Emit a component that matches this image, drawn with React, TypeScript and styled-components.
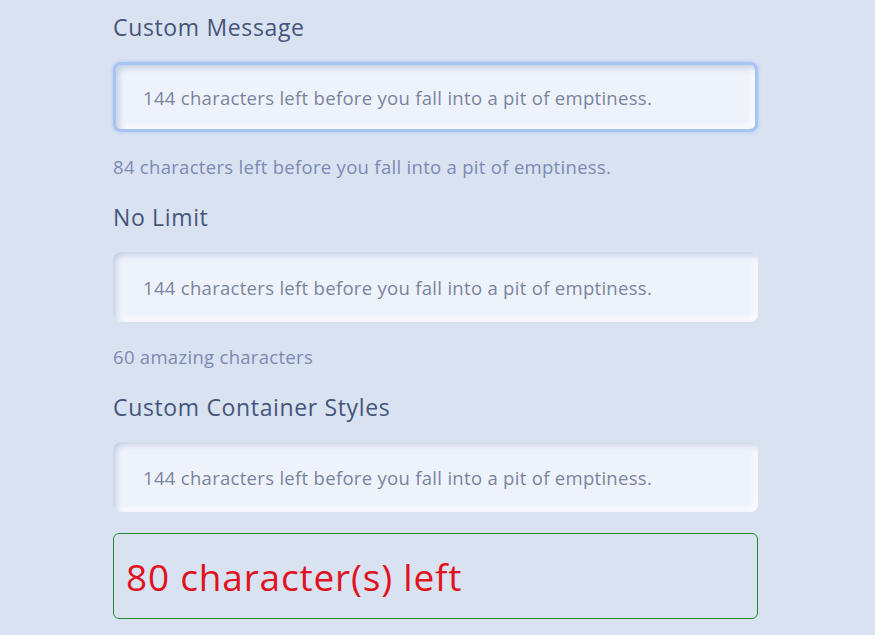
import styled, { createGlobalStyle } from "styled-components";

const GlobalStyle = createGlobalStyle`
  html, body {
    margin: 0;
    background: #d9e2f1;
  }
  body {
    font-family: "Open Sans", "Lato", sans-serif;
  }
`;

type FieldPropsType = {
  label: string;
  placeholder: string;
  helper?: string;
  focused?: boolean;
};

const Field = (props: FieldPropsType) => {
  return (
    <Section>
      <Label>{props.label}</Label>
      <Input $focused={props.focused} placeholder={props.placeholder} />
      {props.helper && <Helper>{props.helper}</Helper>}
    </Section>
  );
};

export default function App() {
  const placeholder = "144 characters left before you fall into a pit of emptiness.";
  return (
    <>
      <GlobalStyle />
      <Page>
        <Field
          label="Custom Message"
          placeholder={placeholder}
          helper="84 characters left before you fall into a pit of emptiness."
          focused
        />
        <Field label="No Limit" placeholder={placeholder} helper="60 amazing characters" />
        <Field label="Custom Container Styles" placeholder={placeholder} />
        <Counter>80 character(s) left</Counter>
      </Page>
    </>
  );
}

const Page = styled.div`
  width: 645px;
  margin: 0 0 0 113px;
  padding: 11px 0 0 0;
  display: flex;
  flex-direction: column;
`;

const Section = styled.div`
  display: flex;
  flex-direction: column;
`;

const Label = styled.div`
  color: #46557a;
  font-size: 23px;
  letter-spacing: 0.65px;
  line-height: 32px;
  margin-bottom: 19px;
`;

const Input = styled.input<{ $focused?: boolean }>`
  box-sizing: border-box;
  width: 100%;
  height: 70px;
  padding: 0 30px;
  border-radius: 8px;
  border: ${(p) => (p.$focused ? "3px solid #a7c4f2" : "none")};
  padding-left: ${(p) => (p.$focused ? "27px" : "30px")};
  background: #eef3fb;
  box-shadow: inset 3px 3px 6px #c5cfe2, inset -3px -3px 6px #ffffff
    ${(p) => (p.$focused ? ", 0 0 3px 1px #b9d0f5" : "")};
  font-family: inherit;
  font-size: 18.5px;
  letter-spacing: 0.3px;
  color: #7a849f;
  outline: none;

  &::placeholder {
    color: #7a849f;
  }
`;

const Helper = styled.div`
  color: #7c8ab3;
  font-size: 18.5px;
  letter-spacing: 0.3px;
  line-height: 24px;
  margin: 23px 0 22px 0;
`;

const Counter = styled.div`
  box-sizing: border-box;
  margin-top: 21px;
  height: 86px;
  border: 1px solid #238636;
  border-radius: 6px;
  padding: 0 12px;
  display: flex;
  align-items: center;
  color: #e0121e;
  font-size: 37px;
  letter-spacing: 0.8px;
`;
